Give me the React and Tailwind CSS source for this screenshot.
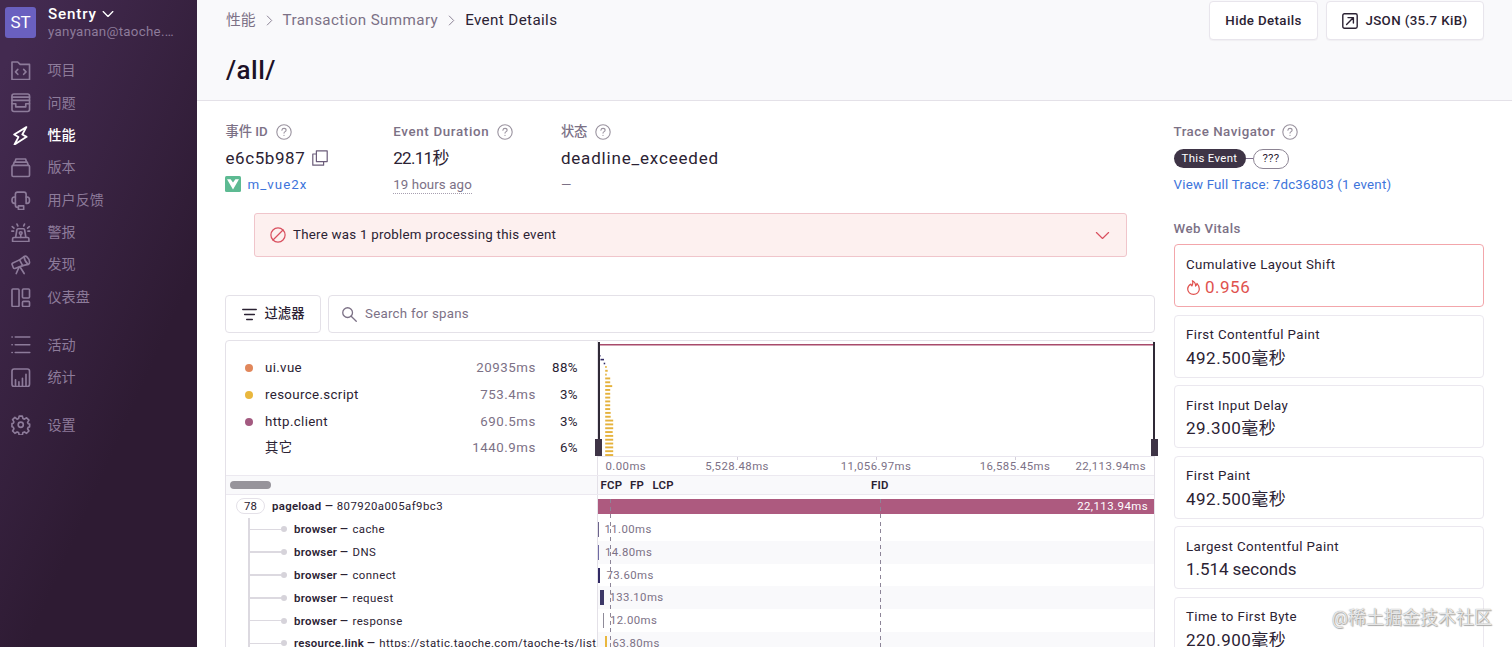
import clsx from 'clsx';

// ─── Icons ────────────────────────────────────────────────────────────────────
function Svg({ className = 'size-[20px]', stroke = 1.25, children }) {
  return (
    <svg
      viewBox="0 0 16 16"
      className={clsx('shrink-0', className)}
      fill="none"
      stroke="currentColor"
      strokeWidth={stroke}
      strokeLinecap="round"
      strokeLinejoin="round"
    >
      {children}
    </svg>
  );
}

const NAV_ICONS = {
  projects: (
    <>
      <path d="M.8 15.2V.8h4.7l2 2h7.7v12.4z" />
      <path d="M5.6 6.9 3.7 8.9l1.9 2M10.4 6.9l1.9 2-1.9 2" />
    </>
  ),
  issues: (
    <>
      <rect x=".8" y=".8" width="14.4" height="14.4" rx="1.6" />
      <path d="M.8 3.4h14.4M.8 6h14.4M.8 8.8h3.1v2.6h8.2V8.8h3.1" />
    </>
  ),
  performance: <path d="M12.6.9 2.6 7l3.5 2.1-3.2 6.1 9.9-6.3-3.5-1.9z" />,
  releases: (
    <>
      <rect x=".8" y="6" width="14.4" height="9.2" rx="1" />
      <path d="m1.8 6 .9-2.6h10.6l.9 2.6M3.3 3.2 4 .8h8l.7 2.4" />
    </>
  ),
  support: (
    <>
      <path d="M3.6 4.9V2.7c0-1 .8-1.8 1.8-1.8h5.2c1 0 1.8.8 1.8 1.8v2.2" />
      <path d="M3.6 4.9v5.3H2.8C1.6 10.2.8 9 .8 7.6s.8-2.7 2-2.7zM12.4 4.9v5.3h.8c1.2 0 2-1.2 2-2.6s-.8-2.7-2-2.7z" />
      <path d="M3.6 10.2v1.2c0 1.2.7 2 1.9 2h.6M6.1 12.2h4.3v3H6.1z" />
    </>
  ),
  alerts: (
    <>
      <path d="M1.3 15.2v-2.3c0-.6.4-1 1-1h11.4c.6 0 1 .4 1 1v2.3zM3.8 11.9l1-6.3c.1-.6.5-.9 1-.9h4.4c.5 0 .9.3 1 .9l1 6.3" />
      <circle cx="8" cy="8.3" r="1.1" />
      <path d="M8 9.5v2.4M5.6 2.4 4.9.9M10.4 2.4l.7-1.5M2.4 4.2 1 3M13.6 4.2 15 3M2.1 6.7H.7M13.9 6.7h1.4" />
    </>
  ),
  discover: (
    <>
      <path d="m7 4 3.7-2.7c.7-.5 1.500-.6 2.400.2 1.500 1.300 2.200 2.900 2.100 4.800 0 .8-.5 1.200-1.200 1.400l-4.400 1z" />
      <path d="M7 4 1.500 6.500c-.6.3-.8.8-.6 1.300l1 2.600c.2.6.7.8 1.300.6l6.400-2.300M10.700 1.300c.2 2.500 1.400 4.600 3.300 6.400" />
      <path d="m6.6 9.9-2.300 5.300M7.300 9.600l3.500 5.600" />
    </>
  ),
  dashboards: (
    <>
      <rect x=".8" y=".8" width="5.8" height="14.4" rx=".8" />
      <rect x="9.4" y=".8" width="5.8" height="7.4" rx=".8" />
      <rect x="9.4" y="11" width="5.8" height="4.2" rx=".8" />
    </>
  ),
  activity: <path d="M3.5 1.6h11.9M3.5 8h11.9M3.5 14.4h11.9M.8 1.6H1M.8 8H1M.8 14.4H1" />,
  stats: (
    <>
      <rect x=".8" y=".8" width="14.4" height="14.4" rx="1.8" />
      <path d="M3.7 14.8V9.7M6.5 14.8v-3.4M9.4 14.8V8.5M12.3 14.8V5.2" />
    </>
  ),
  settings: (
    <>
      <path d="M6.7.9h2.6l.5 2 1.2.5 1.8-1.1 1.9 1.9-1.1 1.8.5 1.2 1.2.3v1l-.1 1.3-1.1.3-.5 1.2 1.1 1.8-1.9 1.9-1.8-1.1-1.2.5-.5 2H6.7l-.5-2-1.2-.5-1.8 1.1-1.9-1.9 1.1-1.8-.5-1.2-1.1-.4V7.1l1.1-.3.5-1.2-1.1-1.8 1.9-1.9L5 3.4l1.2-.5z" />
      <circle cx="8" cy="8" r="2.1" />
    </>
  ),
};

function Help() {
  return (
    <Svg className="size-[16px] text-[#9a939f]" stroke={1.1}>
      <circle cx="8" cy="8" r="7.2" />
      <path d="M5.9 6.3c.1-1.2 1-1.9 2.1-1.9s2.1.7 2.1 1.8c0 1.4-2.1 1.4-2.1 2.9M8 11.4v.1" />
    </Svg>
  );
}

function Chevron({ className, stroke }) {
  return (
    <Svg className={className} stroke={stroke}>
      <path d="m1.500 4.800 6.500 6.400 6.500-6.400" />
    </Svg>
  );
}

// ─── Sidebar ──────────────────────────────────────────────────────────────────
const NAV_GROUPS = [
  [
    ['projects', '项目'],
    ['issues', '问题'],
    ['performance', '性能'],
    ['releases', '版本'],
    ['support', '用户反馈'],
    ['alerts', '警报'],
    ['discover', '发现'],
    ['dashboards', '仪表盘'],
  ],
  [
    ['activity', '活动'],
    ['stats', '统计'],
  ],
  [['settings', '设置']],
];

function Sidebar() {
  return (
    <aside className="w-[197px] shrink-0 bg-[linear-gradient(294deg,#2e1b33_35%,#432a50_93%)] text-[#8d7b9a]">
      <div className="flex h-[54.5px] gap-[12px] pl-[5px] pt-[7px]">
        <div className="flex size-[31px] items-center justify-center rounded-[3px] bg-[#6a60c0] text-[17px] text-white">
          ST
        </div>
        <div className="-mt-[2px]">
          <div className="flex items-center gap-[5px] text-[15.2px] font-medium leading-[18px] tracking-[0.85px] text-white">
            Sentry
            <Chevron className="size-[12px]" stroke={1.8} />
          </div>
          <div className="mt-px text-[13.3px] leading-[16px] tracking-[0.29px]">yanyanan@taoche.…</div>
        </div>
      </div>
      <nav className="flex flex-col gap-[15.3px]">
        {NAV_GROUPS.map((group, i) => (
          <div key={i}>
            {group.map(([id, label]) => (
              <a
                key={id}
                className={clsx(
                  'flex h-[32.4px] items-center gap-[17px] pl-[11px] text-[14.1px]',
                  id === 'performance' && 'font-medium text-white'
                )}
              >
                <Svg className="size-[19.5px]" stroke={id === 'performance' ? 1.5 : 1.35}>
                  {NAV_ICONS[id]}
                </Svg>
                {label}
              </a>
            ))}
          </div>
        ))}
      </nav>
    </aside>
  );
}

// ─── Page header ──────────────────────────────────────────────────────────────
function Header() {
  return (
    <header className="flex h-[101px] shrink-0 justify-between border-b border-[#e4e1e8] bg-[#f9f9fb] pl-[29px] pr-[28px]">
      <div>
        <div className="mt-[9px] flex h-[22px] items-center text-[15.2px] tracking-[0.38px] text-[#7c7186]">
          <span className="text-[14.8px] tracking-normal">性能</span>
          <Chevron className="mx-[8px] size-[11px] -rotate-90" />
          <span>Transaction Summary</span>
          <Chevron className="mx-[8px] size-[11px] -rotate-90" />
          <span className="text-[#2b2233]">Event Details</span>
        </div>
        <h1 className="mt-[22px] text-[26px] font-medium leading-[34px] tracking-[0.45px] text-[#1d1127]">/all/</h1>
      </div>
      <div className="flex gap-[8px] pt-[1px] text-[13.3px] font-medium text-[#2b2233]">
        <button className="h-[39px] w-[109px] rounded-[4px] border border-[#e8e5ec] bg-white tracking-[0.38px] shadow-[0_1px_1px_rgba(43,34,51,0.04)]">
          Hide Details
        </button>
        <button className="flex h-[39px] w-[158px] items-center justify-center gap-[7px] rounded-[4px] border border-[#e8e5ec] bg-white tracking-[0.38px] shadow-[0_1px_1px_rgba(43,34,51,0.04)]">
          <Svg className="size-[16px]" stroke={1.4}>
            <rect x=".8" y=".8" width="14.4" height="14.4" rx="1.6" />
            <path d="m4.6 11.4 6.6-6.6M6 4.6h5.4V10" />
          </Svg>
          JSON (35.7 KiB)
        </button>
      </div>
    </header>
  );
}

// ─── Event metadata ───────────────────────────────────────────────────────────
function Meta({ label, value, children }) {
  return (
    <div className="w-[167.7px]">
      <div className="flex h-[20px] items-center gap-[8px] text-[13.3px] font-medium text-[#7c7186]">
        {label}
        <Help />
      </div>
      <div className="mt-[4px] flex h-[26px] items-center gap-[8px] text-[17px] text-[#2b2233]">
        {value}
      </div>
      <div className="mt-[3px] flex h-[20px] items-center text-[13.3px] text-[#7c7186]">
        {children}
      </div>
    </div>
  );
}

function EventMeta() {
  return (
    <div className="flex h-[72px]">
      <Meta
        label={<span className="tracking-[-0.05px]">事件 ID</span>}
        value={
          <>
            <span className="tracking-[0.58px]">e6c5b987</span>
            <Svg className="-ml-px -mt-[3px] size-[16px] text-[#6b5c7a]" stroke={1.2}>
              <path d="M4.4.8h10.800v10.800H4.4z" />
              <path d="M4.4 4H.8v11.200h10.800v-3.600" />
            </Svg>
          </>
        }
      >
        <svg viewBox="0 0 16 16" className="-ml-px -mt-[2px] mr-[7px] size-[16px]">
          <rect width="16" height="16" rx="1.5" fill="#5dba92" />
          <path d="M2 3.2h3.600L8 6.600l2.400-3.400H14L8 13.600z" fill="#fff" />
        </svg>
        <a className="tracking-[1.05px] text-[#3d74db]">m_vue2x</a>
      </Meta>
      <Meta label={<span className="tracking-[0.68px]">Event Duration</span>} value={<span className="tracking-[-0.7px]">22.11秒</span>}>
        <span className="mt-[1px] border-b border-dotted border-[#a79fb0] leading-[16px] tracking-[0.1px]">19 hours ago</span>
      </Meta>
      <Meta label={<span className="tracking-[-0.2px]">状态</span>} value={<span className="tracking-[0.82px]">deadline_exceeded</span>}>
        —
      </Meta>
    </div>
  );
}

// ─── Span view ────────────────────────────────────────────────────────────────
const OPS = [
  { name: 'ui.vue', ms: '20935ms', pct: '88%', dot: 'bg-[#e1875b]' },
  { name: 'resource.script', ms: '753.4ms', pct: '3%', dot: 'bg-[#e9b73e]' },
  { name: 'http.client', ms: '690.5ms', pct: '3%', dot: 'bg-[#a35a80]' },
  { name: '其它', ms: '1440.9ms', pct: '6%', dot: 'bg-transparent' },
];

// [x, y, width] of each span in the minimap
const MINI_DARK = [[1, 14, 1], [2, 17.8, 3.5], [5.2, 21.7, 1.5]];
const MINI_YELLOW_WIDTHS = [
  1.5, 2.5, 1.5, 5, 5, 7, 5, 5, 5, 5, 5, 5, 5.5, 5.5, 8, 8, 8, 7.5, 8, 8, 8, 8, 8, 8,
];

const SPANS = [
  { op: 'browser', desc: 'cache', ms: '11.00ms', left: 0, w: 1, text: 6.5, color: 'bg-[#6c648c]' },
  { op: 'browser', desc: 'DNS', ms: '14.80ms', left: 0, w: 1, text: 7, color: 'bg-[#6f6aa3]' },
  { op: 'browser', desc: 'connect', ms: '73.60ms', left: 0, w: 2, text: 8.5, color: 'bg-[#312a64]' },
  { op: 'browser', desc: 'request', ms: '133.10ms', left: 2, w: 3.5, text: 11.5, color: 'bg-[#3c3767]' },
  { op: 'browser', desc: 'response', ms: '12.00ms', left: 5, w: 1.3, text: 12, color: 'bg-[#8f8b99]' },
  { op: 'resource.link', desc: 'https://static.taoche.com/taoche-ts/list.', ms: '63.80ms', left: 7, w: 2, text: 14.5, color: 'bg-[#e9b73e]' },
];

function Minimap() {
  return (
    <div className="relative flex-1 border-l border-[#e4e1e8]">
      <svg className="block h-[115px] w-full">
        <rect x="1" y="3" width="100%" height="1.5" fill="#a84a6b" />
        {MINI_DARK.map(([x, y, w]) => (
          <rect key={y} x={x + 0.5} y={y} width={w} height="1.6" fill="#312a64" />
        ))}
        {MINI_YELLOW_WIDTHS.map((w, i) => (
          <rect key={i} x="7.2" y={25 + i * 3.83} width={w} height="1.9" fill="#e5b23c" />
        ))}
      </svg>
      <div className="relative h-[19px] border-t border-[#e9e6ee] text-[11.4px] leading-[19px] tracking-[0.42px] text-[#7c7186]">
        {/* tick labels sit on the time axis */}
        <span className="absolute left-[7.5px]">0.00ms</span>
        <span className="absolute left-[25%] -translate-x-1/2">5,528.48ms</span>
        <span className="absolute left-1/2 -translate-x-1/2">11,056.97ms</span>
        <span className="absolute left-[75%] -translate-x-1/2">16,585.45ms</span>
        <span className="absolute right-[8px]">22,113.94ms</span>
        <i className="absolute left-[25%] top-0 h-[3px] w-px bg-[#d4cfdb]" />
        <i className="absolute left-1/2 top-0 h-[3px] w-px bg-[#d4cfdb]" />
        <i className="absolute left-[75%] top-0 h-[3px] w-px bg-[#d4cfdb]" />
      </div>
      {/* drag handles */}
      <i className="absolute left-0 top-px h-[114px] w-[2px] bg-[#2f2936]" />
      <i className="absolute -left-[3px] top-[98px] h-[17px] w-[7px] bg-[#3e3446]" />
      <i className="absolute -right-px top-px h-[114px] w-[2px] bg-[#2f2936]" />
      <i className="absolute -right-[4px] top-[98px] h-[17px] w-[7px] bg-[#3e3446]" />
    </div>
  );
}

function SpanRow({ span, striped }) {
  return (
    <div className="flex h-[22.85px]">
      <div className="flex w-[371px] shrink-0 items-center overflow-hidden whitespace-nowrap pl-[22px] text-[11.4px] text-[#2b2233]">
        <div className="flex h-full w-[39px] shrink-0 items-center border-l-2 border-[#dcd9e0]">
          <i className="h-[1.5px] flex-1 bg-[#dcd9e0]" />
          <i className="size-[6px] rounded-full bg-[#d6d3da]" />
        </div>
        <span className="ml-[7px] pt-px tracking-[0.28px]">
          <b className="font-semibold">
            {span.op} <span className="inline-block w-[9px] origin-left scale-x-90">—</span>
          </b>{' '}
          <span className="tracking-[0.42px]">{span.desc}</span>
        </span>
      </div>
      <div
        className={clsx(
          'relative flex-1 border-l border-[#e4e1e8] text-[11.4px] leading-[23px] tracking-[0.4px] text-[#7c7186]',
          striped && 'bg-[#f9f9fb]'
        )}
      >
        <i className={clsx('absolute top-[4px] h-[15px]', span.color)} style={{ left: span.left, width: span.w }} />
        <span className="absolute" style={{ left: span.text }}>{span.ms}</span>
      </div>
    </div>
  );
}

function VitalLine({ className }) {
  return (
    <i
      className={clsx(
        'absolute bottom-0 top-[158px] w-px bg-[repeating-linear-gradient(to_bottom,#8d8598_0_4px,transparent_4px_7.6px)]',
        className
      )}
    />
  );
}

function SpanView() {
  return (
    <div className="relative mt-[7px] h-[420px] w-[930px] rounded-t-[4px] border border-[#e4e1e8]">
      <div className="flex h-[134px]">
        <div className="w-[371px] shrink-0 pl-[19px] pr-[19px] pt-[14px] text-[13.3px] text-[#2b2233]">
          {OPS.map(op => (
            <div key={op.name} className="flex h-[26.7px] items-center">
              <i className={clsx('mr-[12px] size-[8px] rounded-full', op.dot)} />
              <span className="flex-1 tracking-[0.35px]">{op.name}</span>
              <span className="tracking-[0.55px] text-[#7c7186]">{op.ms}</span>
              <span className="w-[42px] text-right tracking-[0.4px]">{op.pct}</span>
            </div>
          ))}
        </div>
        <Minimap />
      </div>

      <div className="flex h-[20px] border-y border-[#ece9f0] bg-[#f9f9fb]">
        <div className="flex w-[371px] items-center pl-[4px]">
          <i className="h-[8px] w-[41px] rounded-full bg-[#97949b]" />
        </div>
        <div className="relative flex-1 border-l border-[#e4e1e8] text-[11.4px] font-semibold leading-[19px] tracking-[0.25px] text-[#2b2233]">
          <span className="absolute left-[2.5px]">FCP</span>
          <span className="absolute left-[32px]">FP</span>
          <span className="absolute left-[54.5px]">LCP</span>
          <span className="absolute left-[273px]">FID</span>
        </div>
      </div>

      <div className="flex h-[22.85px]">
        <div className="flex w-[371px] items-center pl-[10px] text-[11.4px] text-[#2b2233]">
          <span className="flex h-[16px] w-[29px] items-center justify-center rounded-full border border-[#e4e1e8] bg-white">78</span>
          <span className="ml-[7px] tracking-[0.3px]">
            <b className="font-semibold">
              pageload <span className="inline-block w-[9px] origin-left scale-x-90">—</span>
            </b>{' '}
            <span className="tracking-[0.45px]">807920a005af9bc3</span>
          </span>
        </div>
        <div className="flex-1 border-l border-[#e4e1e8] pt-[3.5px]">
          <div className="h-[15.5px] bg-[#ad5a7f] pr-[6px] text-right text-[11.4px] leading-[15.5px] tracking-[0.45px] text-white">
            22,113.94ms
          </div>
        </div>
      </div>
      {SPANS.map((span, i) => (
        <SpanRow key={span.desc} span={span} striped={i % 2 === 1} />
      ))}
      <VitalLine className="left-[384px]" />
      <VitalLine className="left-[654px]" />
    </div>
  );
}

// ─── Right column ─────────────────────────────────────────────────────────────
const VITALS = [
  { name: 'Cumulative Layout Shift', value: '0.956', poor: true },
  { name: 'First Contentful Paint', value: '492.500毫秒' },
  { name: 'First Input Delay', value: '29.300毫秒' },
  { name: 'First Paint', value: '492.500毫秒' },
  { name: 'Largest Contentful Paint', value: '1.514 seconds' },
  { name: 'Time to First Byte', value: '220.900毫秒' },
];

function Details() {
  return (
    <section className="w-[310px] text-[13.3px] tracking-[0.4px]">
      <div className="flex h-[20px] items-center gap-[7px] font-medium tracking-[0.5px] text-[#7c7186]">
        Trace Navigator
        <Help />
      </div>
      <div className="mt-[6px] flex h-[21px] items-center text-[11.4px] tracking-[0.35px]">
        <span className="flex h-[19px] w-[72px] items-center justify-center rounded-full bg-[#3e3446] text-white">This Event</span>
        <i className="h-px w-[7.5px] bg-[#80708f]" />
        <span className="flex h-[20px] w-[36px] items-center justify-center rounded-full border border-[#8c8493] text-[#2b2233]">???</span>
      </div>
      <a className="mt-[6px] block leading-[20px] tracking-[0.22px] text-[#3d74db]">View Full Trace: 7dc36803 (1 event)</a>
      <h4 className="mt-[24px] font-medium leading-[20px] text-[#7c7186]">Web Vitals</h4>
      <div className="mt-[5px] flex flex-col gap-[7.5px]">
        {VITALS.map(v => (
          <div
            key={v.name}
            className={clsx(
              'h-[63px] rounded-[4px] border pl-[11.5px] pt-[9.5px] text-[#2b2233]',
              v.poor ? 'border-[#f3a6ab]' : 'border-[#ebe8ef]'
            )}
          >
            <div className="leading-[19px]">{v.name}</div>
            <div
              className={clsx(
                'mt-[1.5px] flex items-center gap-[4px] text-[17px] leading-[25px]',
                v.poor && 'text-[#e0524f]',
                v.value.includes('seconds') ? 'tracking-[-0.05px]' : 'tracking-[0.5px]'
              )}
            >
              {v.poor && (
                <Svg className="size-[15px]" stroke={1.3}>
                  <path d="M6.8.8c.9 2 .5 3.7-.5 5.5-.7-.5-1-1.200-1-2C3.200 5.500 1.800 7.500 1.800 9.600c0 3.300 2.700 5.700 6.200 5.700s6.200-2.400 6.200-5.700c0-2.400-1-4.400-2.500-6-.1 1.300-.6 2.200-1.500 2.900C10.300 4 9.300 1.900 6.800.8z" />
                </Svg>
              )}
              {v.value}
            </div>
          </div>
        ))}
      </div>
    </section>
  );
}

export default function App() {
  return (
    <div className="relative flex h-[647px] w-[1512px] overflow-hidden bg-white font-['Roboto','Noto_Sans_CJK_SC',sans-serif]">
      <Sidebar />
      <div className="flex min-w-0 flex-1 flex-col">
        <Header />
        <main className="flex h-[546px] gap-[18.5px] overflow-hidden pl-[28px] pt-[21px]">
          <div className="w-[930px] shrink-0">
            <div className="pl-[0.5px]">
              <EventMeta />
            </div>
            <div className="mx-[28.5px] mt-[19px] flex h-[44px] items-center rounded-[3px] border border-[#f0c5cb] bg-[#fdf0ef] px-[15.5px] text-[13.3px] tracking-[0.25px] text-[#2b2233]">
              <Svg className="mr-[7px] size-[16px] text-[#d9505f]">
                <circle cx="8" cy="8" r="7.1" />
                <path d="m3 13 10-10" />
              </Svg>
              <span className="flex-1">There was 1 problem processing this event</span>
              <Chevron className="size-[15px] text-[#d9505f]" />
            </div>
            <div className="mt-[38px] flex gap-[7px]">
              <button className="flex h-[38px] w-[96px] items-center justify-center gap-[8px] rounded-[4px] border border-[#e4e1e8] text-[13.3px] font-medium text-[#2b2233]">
                <Svg className="size-[15px]" stroke={1.5}>
                  <path d="M.8 2.600h14.400M2.800 8h10.400M5 13.400h6" />
                </Svg>
                过滤器
              </button>
              <div className="flex h-[38px] flex-1 items-center gap-[8px] rounded-[4px] border border-[#e4e1e8] pl-[13px] text-[13.3px] tracking-[0.25px] text-[#7c7186]">
                <Svg className="size-[15px]" stroke={1.4}>
                  <circle cx="6" cy="6" r="5.200" />
                  <path d="m9.800 9.800 5.400 5.400" />
                </Svg>
                Search for spans
              </div>
            </div>
            <SpanView />
          </div>
          <Details />
        </main>
      </div>
      <div className="absolute bottom-[15px] right-[20px] text-[18px] leading-[28px] text-white/80 [text-shadow:0_0_1px_#777,1px_1px_1px_#aaa]">
        @稀土掘金技术社区
      </div>
    </div>
  );
}
